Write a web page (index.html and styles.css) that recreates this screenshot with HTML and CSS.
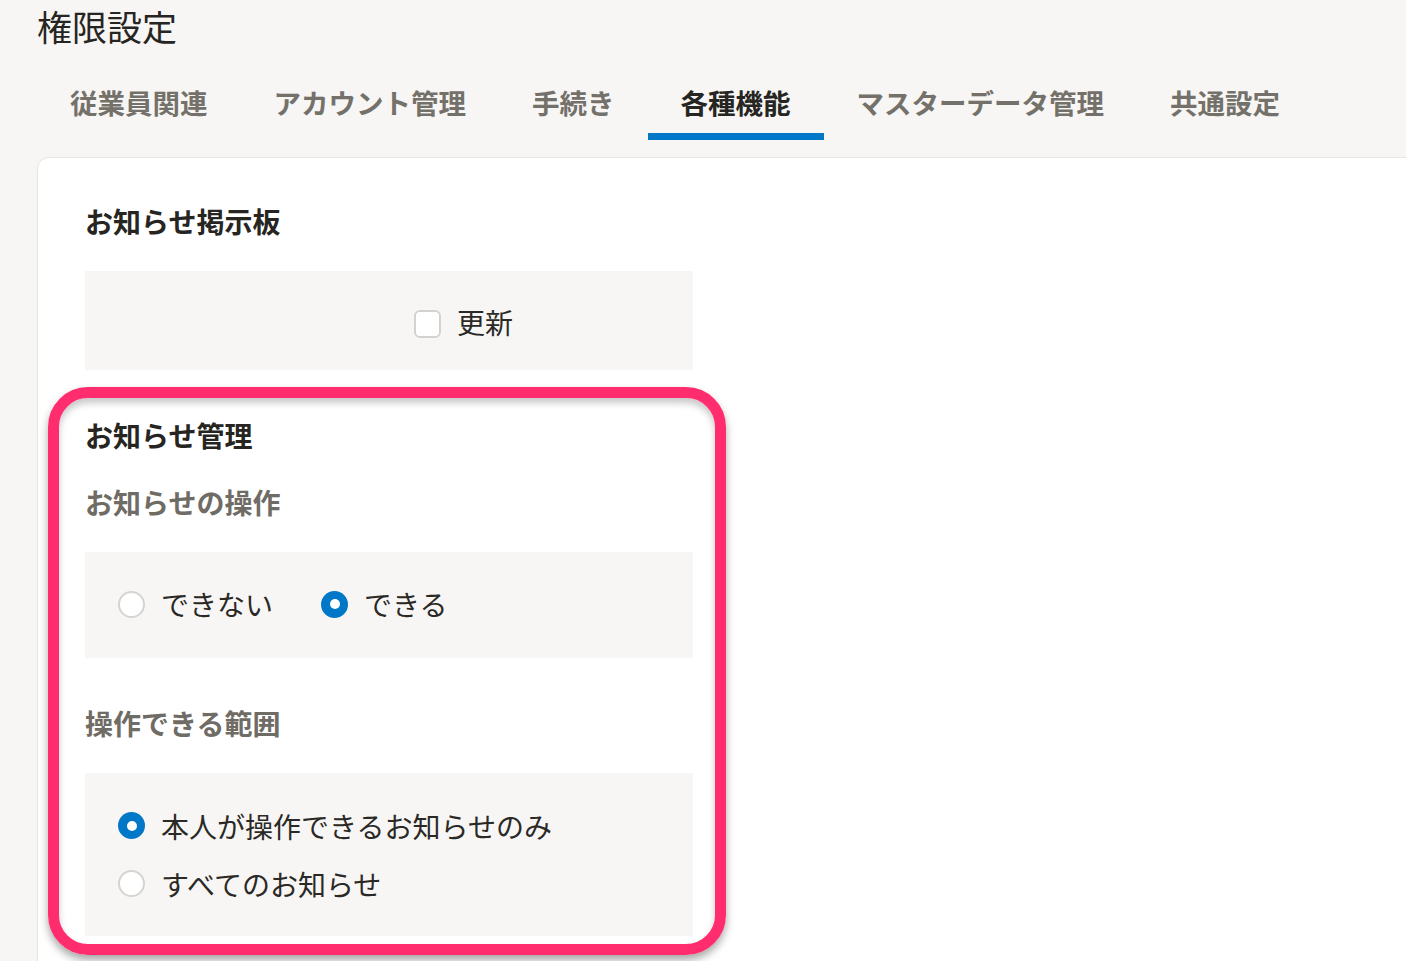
FILE: index.html
```html
<!DOCTYPE html>
<html lang="ja">
<head>
<meta charset="utf-8">
<title>権限設定</title>
<link rel="stylesheet" href="styles.css">
</head>
<body>
<div class="page">
  <h1 class="title">権限設定</h1>
  <nav class="tabs">
    <div class="tab">従業員関連</div>
    <div class="tab">アカウント管理</div>
    <div class="tab">手続き</div>
    <div class="tab active">各種機能</div>
    <div class="tab">マスターデータ管理</div>
    <div class="tab">共通設定</div>
  </nav>
  <section class="card">
    <h2 class="heading">お知らせ掲示板</h2>
    <div class="panel panel-check">
      <label class="option">
        <span class="checkbox"></span>
        <span class="label">更新</span>
      </label>
    </div>

    <h2 class="heading heading-2">お知らせ管理</h2>
    <h3 class="subheading">お知らせの操作</h3>
    <div class="panel panel-row">
      <label class="option">
        <span class="radio"></span>
        <span class="label">できない</span>
      </label>
      <label class="option">
        <span class="radio checked"></span>
        <span class="label">できる</span>
      </label>
    </div>

    <h3 class="subheading subheading-2">操作できる範囲</h3>
    <div class="panel panel-col">
      <label class="option">
        <span class="radio checked"></span>
        <span class="label">本人が操作できるお知らせのみ</span>
      </label>
      <label class="option">
        <span class="radio"></span>
        <span class="label">すべてのお知らせ</span>
      </label>
    </div>
  </section>
  <div class="highlight"></div>
</div>
</body>
</html>
```

FILE: styles.css
```css
* { box-sizing: border-box; }
html, body {
  margin: 0;
  padding: 0;
  background: #f7f6f4;
  overflow: hidden;
  height: 961px;
}
body {
  font-family: "Noto Sans CJK JP", "Noto Sans", sans-serif;
  color: #262522;
}
.page {
  position: relative;
  padding-left: 37px;
  height: 961px;
  overflow: hidden;
}
.title {
  margin: 0;
  padding-left: 0;
  font-size: 35px;
  line-height: 51px;
  font-weight: 400;
  color: #262522;
}
.tabs {
  display: flex;
  margin-top: 31px;
}
.tab {
  padding: 0 33px 11px;
  font-size: 27.5px;
  line-height: 40px;
  font-weight: 700;
  color: #74716b;
  border-bottom: 7px solid transparent;
}
.tab.active {
  color: #262522;
  border-bottom-color: #0077c7;
}
.card {
  margin-top: 17px;
  margin-right: -40px;
  background: #fff;
  border: 1px solid #e8e6e2;
  border-radius: 12px 0 0 0;
  padding: 43px 0 40px 47px;
  height: 900px;
}
.heading {
  margin: 0;
  font-size: 28px;
  line-height: 40px;
  font-weight: 700;
  color: #262522;
}
.heading-2 { margin-top: 45px; }
.subheading {
  margin: 27px 0 0;
  font-size: 28px;
  line-height: 40px;
  font-weight: 700;
  color: #6f6c66;
}
.subheading-2 { margin-top: 45px; }
.panel {
  width: 608px;
  background: #f7f6f4;
  margin-top: 30px;
}
.panel-check {
  height: 99px;
  display: flex;
  align-items: center;
  padding-left: 329px;
  padding-top: 2px;
}
.panel-row {
  height: 106px;
  display: flex;
  align-items: center;
  gap: 48px;
  padding-left: 33px;
  padding-bottom: 2px;
}
.panel-col {
  height: 163px;
  display: flex;
  flex-direction: column;
  justify-content: center;
  gap: 18px;
  padding-left: 33px;
}
.option {
  display: flex;
  align-items: center;
  gap: 16px;
}
.label {
  font-size: 28px;
  line-height: 40px;
  font-weight: 400;
  color: #2a2926;
}
.checkbox {
  width: 27px;
  height: 28px;
  border: 2px solid #d4d2ce;
  border-radius: 6px;
  background: #fff;
  margin-top: 4px;
}
.radio {
  width: 27px;
  height: 27px;
  border: 2px solid #d6d4d0;
  border-radius: 50%;
  background: #fff;
  display: flex;
  align-items: center;
  justify-content: center;
}
.radio.checked {
  border: none;
  background: #0077c7;
}
.radio.checked::after {
  content: "";
  width: 10px;
  height: 10px;
  border-radius: 50%;
  background: #fff;
}
.highlight {
  position: absolute;
  left: 48px;
  top: 387px;
  width: 678px;
  height: 568px;
  border: 11px solid #ff2d6e;
  border-radius: 40px;
  box-shadow: 0 5px 8px rgba(0, 0, 0, 0.35), inset 0 5px 7px rgba(0, 0, 0, 0.22);
  pointer-events: none;
}
```
